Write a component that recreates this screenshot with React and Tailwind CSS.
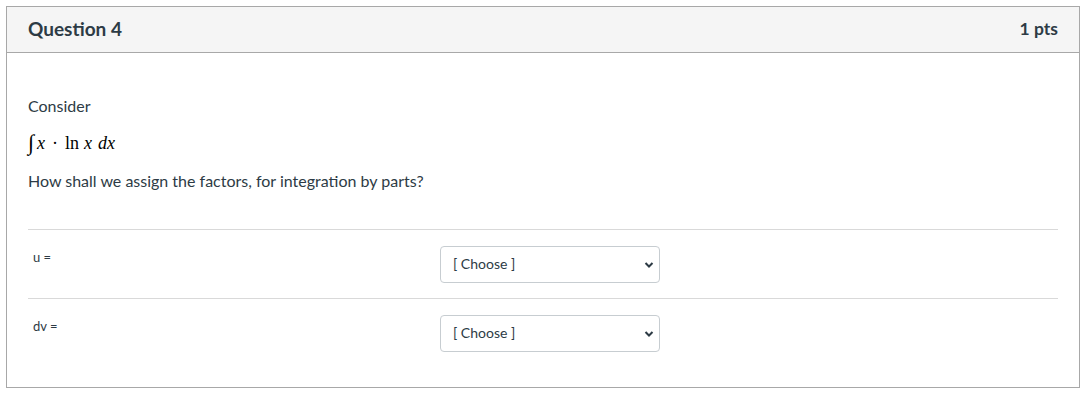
import React from 'react';

function Chevron() {
  return (
    <svg width="10" height="7" viewBox="0 0 10 7" className="absolute right-[6px] top-1/2 -translate-y-1/2 pointer-events-none">
      <path d="M1.5 1.5 L5 5 L8.5 1.5" fill="none" stroke="#2d3b45" strokeWidth="2" />
    </svg>
  );
}

function AnswerRow({ label }) {
  return (
    <div className="border-t border-[#d9d9d9] flex items-start pt-[16px] pb-[15px]">
      <div className="w-[412px] pl-[5px] pt-[2px] text-[13px] leading-[18px] text-[#2d3b45]">{label}</div>
      <div className="relative w-[220px]">
        <select className="appearance-none w-full h-[37px] border border-[#c7cdd1] rounded-[4px] bg-white pl-[12px] pb-[2px] text-[14px] text-[#2d3b45] outline-none" style={{ fontFamily: 'Lato, "Liberation Sans", sans-serif' }}>
          <option>[ Choose ]</option>
        </select>
        <Chevron />
      </div>
    </div>
  );
}

export default function App() {
  return (
    <div className="bg-white min-h-screen pt-[6px] pl-[6px]" style={{ fontFamily: 'Lato, "Liberation Sans", sans-serif' }}>
      <div className="w-[1074px] h-[382px] border border-[#a8a8a8] bg-white">
        <div className="h-[46px] bg-[#f5f5f5] border-b border-[#a8a8a8] flex items-center justify-between px-[21px]">
          <h2 className="text-[19px] font-bold text-[#2d3b45]">Question 4</h2>
          <span className="text-[17.5px] font-bold text-[#2d3b45]">1 pts</span>
        </div>
        <div className="px-[21px] pt-[42px] text-[16px] text-[#2d3b45]">
          <p className="leading-[21px]">Consider</p>
          <p className="mt-[16px] h-[22px] leading-[22px] text-[18px] text-black flex items-center" style={{ fontFamily: '"Liberation Serif", "DejaVu Serif", serif' }}>
            <span className="italic text-[22px]">∫</span>
            <span className="italic ml-[3px]">x</span>
            <span className="mx-[7px]">·</span>
            <span>ln</span>
            <span className="italic ml-[5px]">x</span>
            <span className="italic ml-[6px]">dx</span>
          </p>
          <p className="mt-[16px] leading-[21px]">How shall we assign the factors, for integration by parts?</p>
          <div className="mt-[38px]">
            <AnswerRow label="u =" />
            <AnswerRow label="dv =" />
          </div>
        </div>
      </div>
    </div>
  );
}
